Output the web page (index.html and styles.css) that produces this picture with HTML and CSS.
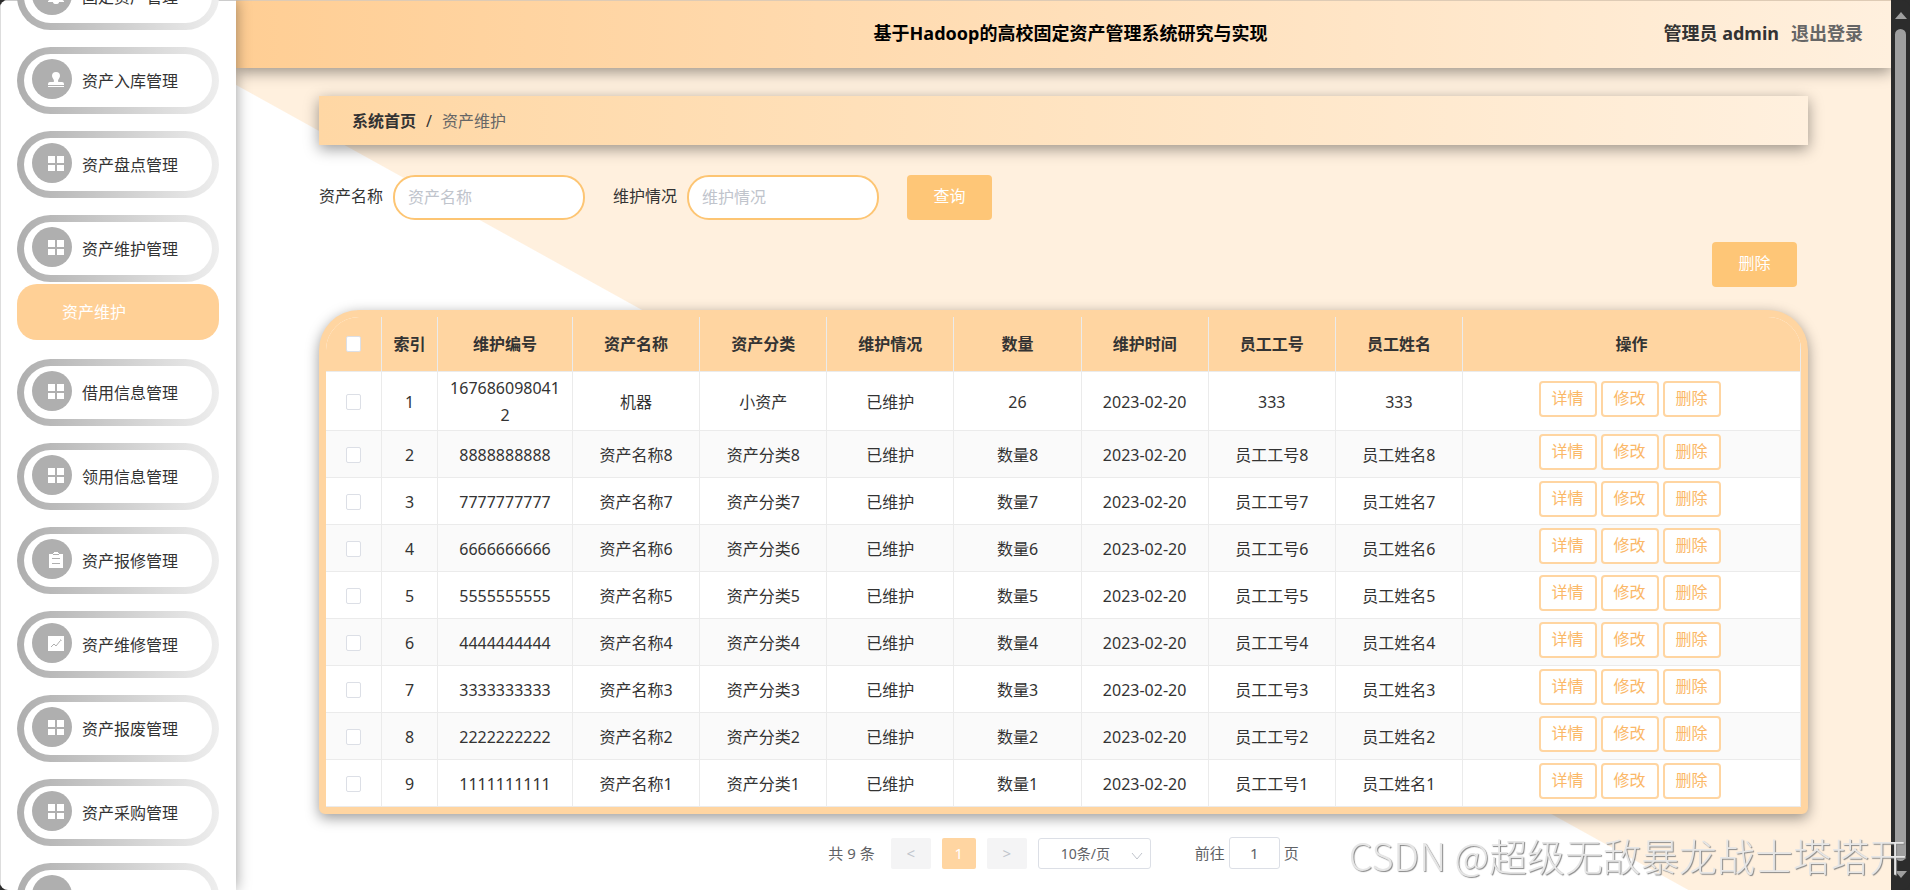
FILE: index.html
```
<!DOCTYPE html>
<html lang="zh-CN">
<head>
    <meta charset="UTF-8">
    <meta name="viewport" content="width=device-width, initial-scale=1.0">
    <title>基于Hadoop的高校固定资产管理系统研究与实现</title>
    <link rel="stylesheet" href="styles.css">
</head>
<body>
    <!-- 图标 -->
    <svg class="sprite" aria-hidden="true">
        <symbol id="icon-bell" viewBox="0 0 16 16">
            <path d="M8 0a5 5 0 0 1 5 5v6l3 2v1h-5a3 2 0 0 1-6 0H0v-1l3-2V5a5 5 0 0 1 5-5z"/>
        </symbol>
        <symbol id="icon-stamp" viewBox="0 0 16 16">
            <path d="M8 0a4 4 0 0 1 4 4c0 2-2 3-2 5 0 .7.4 1 1 1h3a2 2 0 0 1 2 2v1H0v-1a2 2 0 0 1 2-2h3c.6 0 1-.3 1-1 0-2-2-3-2-5a4 4 0 0 1 4-4zM0 14h16v1H0z"/>
        </symbol>
        <symbol id="icon-menu" viewBox="0 0 16 16">
            <path d="M0 0h7v7H0zM9 0h7v7H9zM0 9h7v6H0zM9 9h7v6H9z"/>
        </symbol>
        <symbol id="icon-order" viewBox="0 0 16 16">
            <path fill-rule="evenodd" d="M1 2h4v1h6V2h4v14H1zM4 6v1h8V6zM4 11v1h8v-1zM6 0h4v1h1v1H5V1h1z"/>
        </symbol>
        <symbol id="icon-chart" viewBox="0 0 16 16">
            <path d="M0 0h16v15H0z"/>
            <path class="line" d="M3 11l3-3 2 2 4-5M12 4h1v1"/>
        </symbol>
    </svg>

    <div class="layout">
        <aside class="sidebar">
            <ul class="menu">
                <li>
                    <a class="menu-item" href="#"><span class="icon"><svg><use href="#icon-bell"/></svg></span>固定资产管理</a>
                </li>
                <li>
                    <a class="menu-item" href="#"><span class="icon"><svg><use href="#icon-stamp"/></svg></span>资产入库管理</a>
                </li>
                <li>
                    <a class="menu-item" href="#"><span class="icon"><svg><use href="#icon-menu"/></svg></span>资产盘点管理</a>
                </li>
                <li class="open">
                    <a class="menu-item" href="#"><span class="icon"><svg><use href="#icon-menu"/></svg></span>资产维护管理</a>
                    <a class="submenu-item" href="#">资产维护</a>
                </li>
                <li>
                    <a class="menu-item" href="#"><span class="icon"><svg><use href="#icon-menu"/></svg></span>借用信息管理</a>
                </li>
                <li>
                    <a class="menu-item" href="#"><span class="icon"><svg><use href="#icon-menu"/></svg></span>领用信息管理</a>
                </li>
                <li>
                    <a class="menu-item" href="#"><span class="icon"><svg><use href="#icon-order"/></svg></span>资产报修管理</a>
                </li>
                <li>
                    <a class="menu-item" href="#"><span class="icon"><svg><use href="#icon-chart"/></svg></span>资产维修管理</a>
                </li>
                <li>
                    <a class="menu-item" href="#"><span class="icon"><svg><use href="#icon-menu"/></svg></span>资产报废管理</a>
                </li>
                <li>
                    <a class="menu-item" href="#"><span class="icon"><svg><use href="#icon-menu"/></svg></span>资产采购管理</a>
                </li>
                <li>
                    <a class="menu-item" href="#"><span class="icon"></span></a>
                </li>
            </ul>
        </aside>

        <div class="page">
            <header class="header">
                <h1>基于Hadoop的高校固定资产管理系统研究与实现</h1>
                <div class="user">
                    <span>管理员 admin</span>
                    <a href="#">退出登录</a>
                </div>
            </header>

            <main class="main">
                <nav class="breadcrumb">
                    <a href="#">系统首页</a>
                    <span>/</span>
                    <span class="current">资产维护</span>
                </nav>

                <form class="search">
                    <div class="field">
                        <label for="zichan">资产名称</label>
                        <input type="text" id="zichan" placeholder="资产名称">
                    </div>
                    <div class="field">
                        <label for="weihu">维护情况</label>
                        <input type="text" id="weihu" placeholder="维护情况">
                    </div>
                    <button type="button" class="btn">查询</button>
                </form>

                <div class="actions">
                    <button type="button" class="btn">删除</button>
                </div>

                <div class="table-box">
                    <table>
                        <colgroup>
                            <col class="col-check">
                            <col class="col-index">
                            <col class="col-code">
                            <col span="7">
                            <col class="col-ops">
                        </colgroup>
                        <thead>
                            <tr>
                                <th><input type="checkbox" aria-label="全选"></th>
                                <th>索引</th>
                                <th>维护编号</th>
                                <th>资产名称</th>
                                <th>资产分类</th>
                                <th>维护情况</th>
                                <th>数量</th>
                                <th>维护时间</th>
                                <th>员工工号</th>
                                <th>员工姓名</th>
                                <th>操作</th>
                            </tr>
                        </thead>
                        <tbody id="rows"></tbody>
                    </table>
                </div>

                <div class="pagination">
                    <span class="total">共 9 条</span>
                    <button type="button" class="arrow" disabled>&lt;</button>
                    <button type="button" class="number">1</button>
                    <button type="button" class="arrow" disabled>&gt;</button>
                    <div class="size">
                        <select aria-label="每页条数">
                            <option>10条/页</option>
                        </select>
                        <svg viewBox="0 0 12 12"><path d="M1 3l5 6 5-6"/></svg>
                    </div>
                    <label class="jump">前往 <input type="text" value="1"> 页</label>
                </div>
            </main>
        </div>

        <div class="scrollbar">
            <span class="up"></span>
            <span class="thumb"></span>
            <span class="down"></span>
        </div>
    </div>

    <div class="watermark">CSDN @超级无敌暴龙战士塔塔开</div>

    <script src="script.js"></script>
</body>
</html>
```

FILE: styles.css
```
* {
    box-sizing: border-box;
}
body {
    margin: 0;
    background: #2c2c2c;
    color: #333;
    font-family: "Noto Sans", "Noto Sans CJK SC", sans-serif;
    font-size: 16px;
    line-height: 27px;
}
a {
    color: inherit;
    text-decoration: none;
}
button, input, select {
    font: inherit;
    color: inherit;
    margin: 0;
}
.sprite {
    display: none;
}
.layout {
    display: flex;
    height: 100vh;
    overflow: hidden;
    border-radius: 8px;
}

/* 左侧菜单 */
.sidebar {
    flex: none;
    width: 236px;
    padding: 0 17px 0 16px;
    background: #fff;
    border-top: 1px solid #ccc;
    border-left: 1px solid #ddd;
    box-shadow: 0 0 14px rgba(0, 0, 0, 0.4);
    z-index: 2;
}
.menu {
    display: flex;
    flex-direction: column;
    gap: 17px;
    margin: -38px 0 0;
    padding: 0;
    list-style: none;
}
.menu .open {
    padding-bottom: 2px;
}
.menu-item {
    display: flex;
    align-items: center;
    gap: 10px;
    height: 67px;
    padding: 2px 8px 0;
    border: 7px solid transparent;
    border-radius: 34px;
    background: linear-gradient(#fff, #fff) padding-box, linear-gradient(90deg, #aeaeae, #eee) border-box;
}
.icon {
    display: flex;
    align-items: center;
    justify-content: center;
    width: 40px;
    height: 40px;
    margin-bottom: 5px;
    padding: 2px 0 0 8px;
    border-radius: 50%;
    background: #afafaf;
}
.icon svg {
    width: 16px;
    height: 16px;
    fill: #fff;
}
.line {
    fill: none;
    stroke: #afafaf;
    stroke-width: 1;
}
.submenu-item {
    display: block;
    height: 56px;
    margin-top: 2px;
    padding-left: 45px;
    border-radius: 20px;
    background: #ffd096;
    color: #fff;
    line-height: 56px;
}

/* 右侧内容 */
.page {
    flex: 1;
    display: flex;
    flex-direction: column;
    min-width: 0;
}
.header {
    display: grid;
    grid-template-columns: 1fr auto 1fr;
    align-items: center;
    height: 68px;
    flex: none;
    padding: 0 28px 2px 42px;
    background: linear-gradient(90deg, #ffce94, #fff0de);
    border-top: 1px solid #decbb5;
    box-shadow: 0 4px 14px rgba(0, 0, 0, 0.4);
    font-size: 18px;
    font-weight: bold;
    z-index: 1;
}
.header h1 {
    grid-column: 2;
    margin: 0;
    color: #000;
    font-size: 18px;
}
.user {
    display: flex;
    justify-content: flex-end;
    gap: 12px;
}
.user a {
    color: #666;
}
.main {
    flex: 1;
    padding: 28px 83px 0;
    background: linear-gradient(29deg, #fff calc(50% - 57px), #fff0de calc(50% - 56px));
}
.breadcrumb {
    display: flex;
    gap: 10px;
    padding: 12px 33px 10px;
    background: linear-gradient(90deg, #ffd7a4, #fff0de);
    box-shadow: 0 4px 14px rgba(0, 0, 0, 0.4);
}
.breadcrumb a {
    font-weight: bold;
}
.breadcrumb .current {
    color: #666;
}
.search {
    display: flex;
    gap: 28px;
    margin-top: 30px;
}
.field {
    display: flex;
    align-items: center;
    gap: 10px;
}
.field label {
    padding-bottom: 2px;
}
.field input {
    width: 192px;
    height: 45px;
    padding: 0 13px 2px;
    border: 2px solid #fdc573;
    border-radius: 22px;
    background: #fff;
    outline: none;
}
.field input::placeholder {
    color: #c0c4cc;
}
.btn {
    width: 85px;
    height: 45px;
    padding: 0 0 2px;
    border: none;
    border-radius: 4px;
    background: #fec677;
    color: #fff;
    cursor: pointer;
}
.actions {
    display: flex;
    justify-content: flex-end;
    margin: 22px 11px 23px 0;
}

/* 表格 */
.table-box {
    border: 7px solid #ffd5a1;
    border-radius: 40px 40px 6px 6px;
    background: #fff;
    box-shadow: 0 4px 14px rgba(0, 0, 0, 0.4);
    overflow: hidden;
}
table {
    width: 100%;
    table-layout: fixed;
    border-collapse: separate;
    border-spacing: 0;
}
.col-check, .col-index {
    width: 56px;
}
.col-code {
    width: 135px;
}
.col-ops {
    width: 338px;
}
th, td {
    height: 47px;
    padding: 3px 10px 1px;
    border-right: 1px solid #ebebeb;
    border-bottom: 1px solid #ebebeb;
    text-align: center;
    word-break: break-all;
}
th {
    height: 55px;
    padding: 2px 10px;
    background: #ffd5a1;
}
tbody tr:nth-child(even) {
    background: #fafafa;
}
input[type="checkbox"] {
    display: block;
    width: 15px;
    height: 16px;
    margin: 0 auto;
    appearance: none;
    border: 1px solid #dcdfe6;
    border-radius: 2px;
    background: #fff;
}
.ops {
    padding: 0 0 4px;
}
.ops button {
    width: 58px;
    height: 36px;
    margin-right: 4px;
    padding: 0 0 2px;
    border: 2px solid #ffd5a1;
    border-radius: 4px;
    background: #fff;
    color: #fbb868;
    vertical-align: middle;
    cursor: pointer;
}

/* 分页 */
.pagination {
    display: flex;
    align-items: center;
    justify-content: center;
    gap: 11px;
    margin-top: 23px;
    color: #606266;
    font-size: 15px;
}
.total {
    margin-right: 5px;
}
.pagination button {
    height: 31px;
    padding: 0;
    border: none;
    border-radius: 2px;
}
.arrow {
    width: 40px;
    background: #f4f4f5;
    color: #c0c4cc;
}
.number {
    width: 34px;
    background: #ffd5a1;
    color: #fff;
}
.size {
    position: relative;
}
.size select {
    width: 113px;
    height: 31px;
    padding: 0 0 0 22px;
    border: 1px solid #dcdfe6;
    border-radius: 3px;
    background: #fff;
    font-size: 14px;
    appearance: none;
}
.size svg {
    position: absolute;
    top: 12px;
    right: 8px;
    width: 12px;
    height: 12px;
    fill: none;
    stroke: #c0c4cc;
}
.jump {
    display: flex;
    align-items: center;
    gap: 4px;
    margin-left: 33px;
}
.jump input {
    width: 51px;
    height: 32px;
    border: 1px solid #dcdfe6;
    border-radius: 3px;
    background: #fff;
    text-align: center;
}

/* 滚动条 */
.scrollbar {
    flex: none;
    display: flex;
    flex-direction: column;
    align-items: center;
    gap: 10px;
    width: 19px;
    padding: 12px 0;
    background: #2c2c2c;
    z-index: 2;
}
.up, .down {
    border: 6px solid transparent;
}
.up {
    border-top: none;
    border-bottom: 7px solid #9f9f9f;
}
.down {
    border-bottom: none;
    border-top: 7px solid #9f9f9f;
}
.thumb {
    flex: 1;
    width: 11px;
    border-radius: 6px;
    background: #9f9f9f;
}

.watermark {
    position: fixed;
    right: 3px;
    bottom: 15px;
    z-index: 3;
    color: #e6e6e6;
    font-family: "Noto Sans CJK SC", sans-serif;
    font-size: 38px;
    font-weight: 300;
    line-height: 40px;
    text-shadow: 1px 1px 1px #888;
    white-space: nowrap;
    pointer-events: none;
}
```

FILE: script.js
```
const rows = [['1676860980412', '机器', '小资产', '已维护', '26', '2023-02-20', '333', '333']];
for (let i = 8; i > 0; i--) {
    rows.push([String(i).repeat(10), '资产名称' + i, '资产分类' + i, '已维护', '数量' + i, '2023-02-20', '员工工号' + i, '员工姓名' + i]);
}

document.getElementById('rows').innerHTML = rows.map((row, index) => `
    <tr>
        <td><input type="checkbox" aria-label="选择第${index + 1}行"></td>
        <td>${index + 1}</td>
        ${row.map(text => `<td>${text}</td>`).join('')}
        <td class="ops"><button type="button">详情</button><button type="button">修改</button><button type="button">删除</button></td>
    </tr>
`).join('');
```
